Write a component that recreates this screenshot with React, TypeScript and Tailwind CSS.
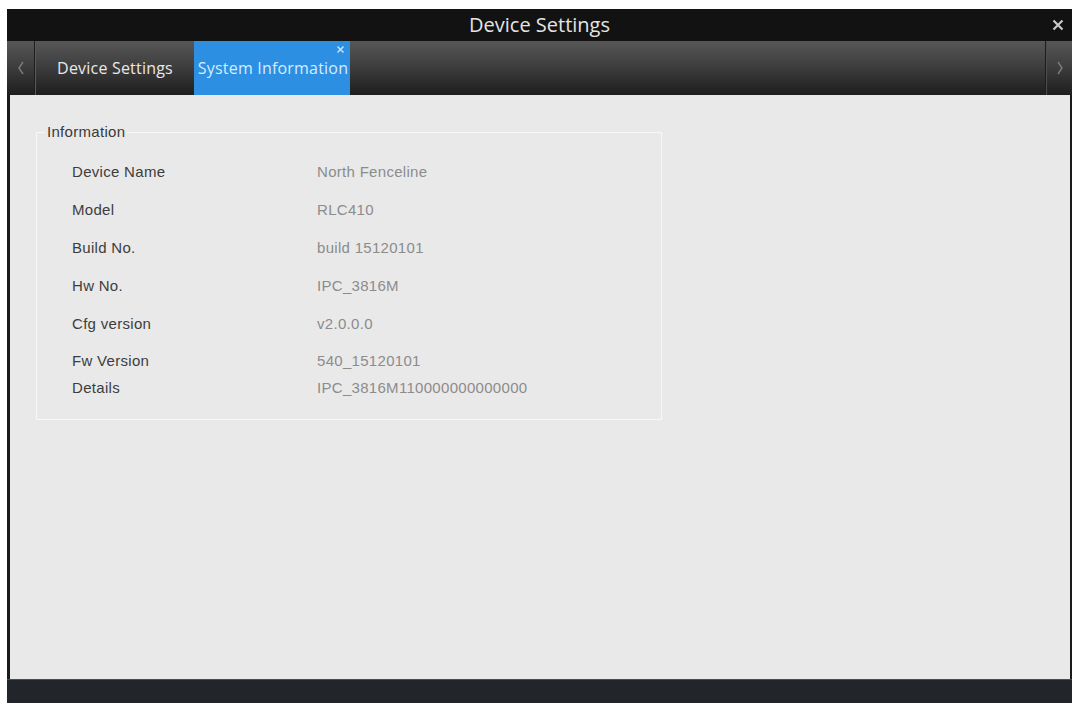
import React from "react";

const rows: { label: string; value: string; h: string }[] = [
  { label: "Device Name", value: "North Fenceline", h: "h-[38px]" },
  { label: "Model", value: "RLC410", h: "h-[38px]" },
  { label: "Build No.", value: "build 15120101", h: "h-[38px]" },
  { label: "Hw No.", value: "IPC_3816M", h: "h-[38px]" },
  { label: "Cfg version", value: "v2.0.0.0", h: "h-[38px]" },
  { label: "Fw Version", value: "540_15120101", h: "h-[36px]" },
  { label: "Details", value: "IPC_3816M110000000000000", h: "h-[18px]" },
];

export default function App() {
  return (
    <div className="w-[1079px] h-[707px] bg-white pt-[9px] pl-[7px] overflow-hidden">
      <div className="w-[1065px] h-[694px] flex flex-col">
        {/* Title bar */}
        <div className="relative h-[32px] bg-[#121212] flex items-center justify-center">
          <span
            className="text-[20px] leading-[32px] text-[#e4e4e4]"
            style={{ fontFamily: '"Open Sans", "Noto Sans", sans-serif' }}
          >
            Device Settings
          </span>
          <svg
            className="absolute right-[8px] top-[10px]"
            width="12"
            height="12"
            viewBox="0 0 12 12"
          >
            <path d="M1.5 1.5 L10.5 10.5 M10.5 1.5 L1.5 10.5" stroke="#c8c8c8" strokeWidth="2.2" />
          </svg>
        </div>
        {/* Tab bar */}
        <div className="h-[54px] flex bg-gradient-to-b from-[#575757] via-[#3c3c3c] to-[#1e1e1e]">
          <div className="w-[28px] flex items-center justify-center border-r border-[#1c1c1c]">
            <svg width="8" height="14" viewBox="0 0 8 14">
              <path d="M6 1 L2 7 L6 13" stroke="#7a7a7a" strokeWidth="1.5" fill="none" />
            </svg>
          </div>
          <div className="w-px bg-[#5a5a5a]" />
          <div
            className="w-[158px] flex items-center justify-center text-[16px] font-medium text-[#e8e8e8] tracking-[0.2px]"
            style={{ fontFamily: '"Open Sans", "Noto Sans", sans-serif' }}
          >
            Device Settings
          </div>
          <div
            className="relative w-[156px] bg-[#2d8fe2] flex items-center justify-center text-[16px] font-medium text-[#d4ecff] tracking-[0.2px]"
            style={{ fontFamily: '"Open Sans", "Noto Sans", sans-serif' }}
          >
            <span className="pl-[2px] whitespace-nowrap">System Information</span>
            <svg className="absolute right-[6px] top-[5px]" width="7" height="7" viewBox="0 0 7 7">
              <path d="M0.5 0.5 L6.5 6.5 M6.5 0.5 L0.5 6.5" stroke="#cfe6ff" strokeWidth="1.4" />
            </svg>
          </div>
          <div className="flex-1" />
          <div className="w-px bg-[#1c1c1c]" />
          <div className="w-[26px] flex items-center justify-center border-l border-[#4e4e4e]">
            <svg width="8" height="14" viewBox="0 0 8 14">
              <path d="M2 1 L6 7 L2 13" stroke="#7a7a7a" strokeWidth="1.5" fill="none" />
            </svg>
          </div>
        </div>
        {/* Content */}
        <div
          className="flex-1 bg-[#e9e9e9] border-l-[3px] border-r-[2px] border-[#1a1a1a] pl-[26px] pt-[29px]"
          style={{ fontFamily: '"Liberation Sans", Arial, sans-serif' }}
        >
          <fieldset className="w-[626px] border border-[#f7f7f7] pl-[8px] pr-[8px] pt-[13px] pb-[22px]">
            <legend className="px-[2px] text-[15px] leading-4 text-[#3a3a3a] tracking-[0.3px]">Information</legend>
            <div className="flex flex-col pl-[27px]">
              {rows.map((r) => (
                <div key={r.label} className={`${r.h} flex items-center text-[15px] tracking-[0.3px]`}>
                  <span className="w-[245px] text-[#3d3d3d]">{r.label}</span>
                  <span className="text-[#8c8c8c]">{r.value}</span>
                </div>
              ))}
            </div>
          </fieldset>
        </div>
        {/* Bottom bar */}
        <div className="h-[24px] bg-[#22262a] border-t border-[#4a4d50]" />
      </div>
    </div>
  );
}
